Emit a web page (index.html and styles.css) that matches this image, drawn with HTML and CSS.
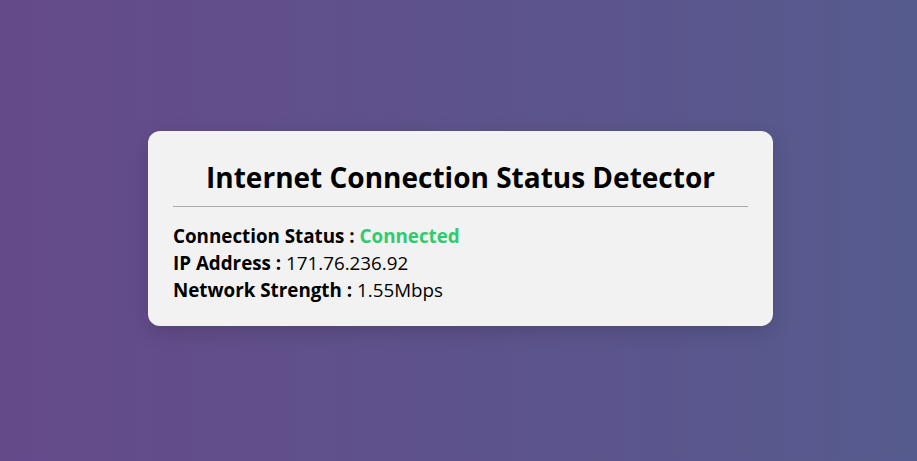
FILE: index.html
```html
<!DOCTYPE html>
<html lang="en">
  <head>
    <meta charset="UTF-8" />
    <meta name="viewport" content="width=device-width, initial-scale=1.0" />
    <title>Internet Connection Status Detector</title>
    <link rel="stylesheet" href="styles.css">
  </head>
  <body>
    <div class="card">
      <h1>Internet Connection Status Detector</h1>
      <hr />
      <div class="row"><strong>Connection Status :</strong> <span class="online">Connected</span></div>
      <div class="row"><strong>IP Address :</strong> <span>171.76.236.92</span></div>
      <div class="row"><strong>Network Strength :</strong> <span>1.55Mbps</span></div>
    </div>
  </body>
</html>
```

FILE: styles.css
```css
* {
  box-sizing: border-box;
}
body {
  margin: 0;
  height: 100vh;
  display: flex;
  align-items: center;
  justify-content: center;
  font-family: "Open Sans", sans-serif;
  background: linear-gradient(to right, #654a8a, #565b8e);
}
.card {
  width: 625px;
  margin: 0 0 4px 4px;
  background: #f2f2f2;
  border-radius: 12px;
  padding: 22px 25px 22px;
  box-shadow: 0 6px 20px rgba(0, 0, 0, 0.15);
}
h1 {
  margin: 0;
  text-align: center;
  font-size: 28px;
  line-height: 48px;
  font-weight: 700;
  color: #000;
}
hr {
  border: none;
  border-top: 1px solid #a9a9a9;
  margin: 5px 0 16px;
}
.row {
  font-size: 18.8px;
  line-height: 27px;
  color: #000;
}
.online {
  color: #2ecc71;
  font-weight: 700;
}
```
